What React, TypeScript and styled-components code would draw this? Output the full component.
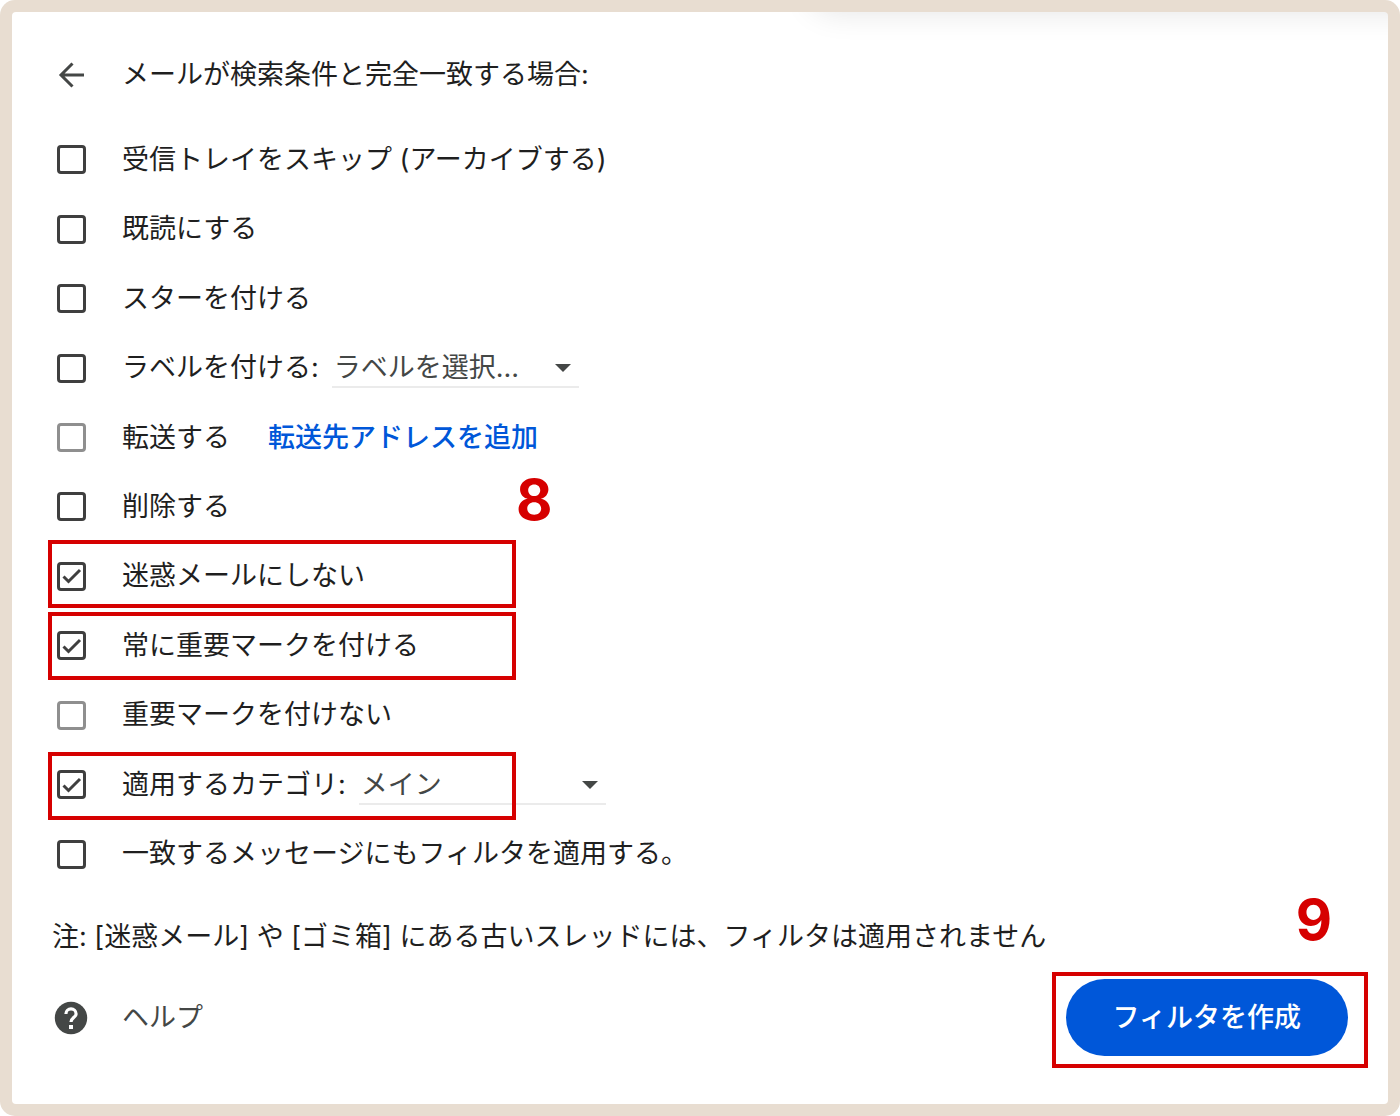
import React, { useState } from "react";
import styled, { createGlobalStyle } from "styled-components";

const color = {
  frame: "#e8ddd1",
  ink: "#1f1f1f",
  muted: "#444746",
  box: "#3f3f3f",
  disabled: "#8f8f8f",
  line: "#ebebeb",
  blue: "#0057d9",
  red: "#d60000",
};

const fontStack = `Inter, "Noto Sans CJK JP", sans-serif`;

const GlobalStyle = createGlobalStyle`
  *, *::before, *::after { box-sizing: border-box; }
  body {
    margin: 0;
    background: #fff;
    color: ${color.ink};
    font-family: ${fontStack};
    font-size: 27px;
    line-height: 40px;
  }
  button, select { font: inherit; }
`;

const Frame = styled.div`
  display: flex;
  min-height: 100vh;
  padding: 12px;
  background: ${color.frame};
  border-radius: 15px;
`;

const Panel = styled.main`
  position: relative;
  flex: 1;
  display: flex;
  flex-direction: column;
  padding: 30px 40px 48px;
  background: #fff;
  border-radius: 4px;
  overflow: hidden;

  &::before {
    content: "";
    position: absolute;
    top: -60px;
    left: 58%;
    right: -60px;
    height: 60px;
    border-radius: 24px;
    box-shadow: 0 0 32px rgba(0, 0, 0, 0.11);
  }
`;

const Header = styled.header`
  display: flex;
  align-items: center;
  gap: 32px;
  height: 66px;
`;

const Title = styled.h1`
  margin: 0;
  font-size: 27px;
  font-weight: 400;
`;

const IconButton = styled.button`
  display: grid;
  place-items: center;
  width: 38px;
  height: 38px;
  padding: 0;
  border: 0;
  background: none;
  color: ${color.muted};
  cursor: pointer;
`;

const OptionArea = styled.div`
  position: relative;
  margin-top: 17px;
`;

const OptionList = styled.ul`
  display: grid;
  grid-auto-rows: 1fr;
  min-height: 764px;
  margin: 0;
  padding: 0;
  list-style: none;
`;

const Option = styled.li`
  display: flex;
  align-items: center;
`;

const OptionLabel = styled.label`
  padding-left: 32px;
`;

const CheckCell = styled.span`
  position: relative;
  display: grid;
  place-items: center;
  width: 38px;
  height: 38px;
  color: ${color.box};

  svg {
    position: absolute;
    inset: 0;
    pointer-events: none;
  }
`;

const CheckInput = styled.input`
  appearance: none;
  width: 29px;
  height: 29px;
  margin: 0;
  border: 3px solid ${color.box};
  border-radius: 4px;
  background: #fff;

  &:disabled {
    border-color: ${color.disabled};
  }
`;

const SelectBox = styled.span`
  position: relative;
  width: 247px;
  margin-left: 13px;

  svg {
    position: absolute;
    right: 7px;
    top: 15px;
    pointer-events: none;
  }
`;

const Select = styled.select`
  appearance: none;
  display: block;
  width: 100%;
  height: 40px;
  padding: 0 32px 0 2px;
  border: 0;
  border-bottom: 2px solid ${color.line};
  border-radius: 0;
  background: none;
  color: ${color.muted};
`;

const TextLink = styled.a`
  margin-left: 38px;
  color: ${color.blue};
  font-weight: 500;
  text-decoration: none;
`;

const Note = styled.p`
  margin: 28px 0 22px;
`;

const Footer = styled.footer`
  position: relative;
  display: flex;
  align-items: center;
  justify-content: space-between;
`;

const HelpLink = styled.a`
  display: flex;
  align-items: center;
  gap: 32px;
  color: ${color.muted};
  text-decoration: none;
`;

const HelpIcon = styled.span`
  display: grid;
  place-items: center;
  width: 38px;
`;

const CreateButton = styled.button`
  height: 77px;
  padding: 0 47px;
  border: 0;
  border-radius: 39px;
  background: ${color.blue};
  color: #fff;
  font-weight: 500;
  cursor: pointer;
`;

const Marker = styled.div<{ $top: number }>`
  position: absolute;
  top: ${(p) => p.$top}px;
  left: -4px;
  width: 468px;
  height: 68px;
  border: 4px solid ${color.red};
  pointer-events: none;
`;

const ButtonMarker = styled.div`
  position: absolute;
  top: -7px;
  right: -20px;
  width: 316px;
  height: 96px;
  border: 4px solid ${color.red};
  pointer-events: none;
`;

const StepNumber = styled.span`
  position: absolute;
  color: ${color.red};
  font-family: Inter, "Liberation Sans", sans-serif;
  font-size: 56px;
  font-weight: 700;
  line-height: 60px;
`;

const OptionStep = styled(StepNumber)`
  top: 345px;
  left: 464px;
`;

const ButtonStep = styled(StepNumber)`
  top: -89px;
  right: 16px;
`;

function BackArrow() {
  return (
    <svg width="38" height="38" viewBox="0 0 38 38" fill="none" stroke="currentColor" strokeWidth="3" aria-hidden="true">
      <path d="M32 19H9M20.5 7.5 9 19l11.5 11.5" />
    </svg>
  );
}

function CheckMark() {
  return (
    <svg width="38" height="38" viewBox="0 0 38 38" fill="none" stroke="currentColor" strokeWidth="3" aria-hidden="true">
      <path d="M11.5 19.500 16.500 24.500 28 13" />
    </svg>
  );
}

function Caret() {
  return (
    <svg width="18" height="10" viewBox="0 0 18 10" fill={color.muted} aria-hidden="true">
      <path d="M1 1H17L9 9Z" />
    </svg>
  );
}

function QuestionMark() {
  return (
    <svg width="34" height="34" viewBox="0 0 34 34" aria-hidden="true">
      <circle cx="17" cy="17" r="16.200" fill={color.muted} />
      <path
        d="M11.900 12.900a5.100 5.100 0 0 1 10.200 0c0 3.400-5.100 4-5.100 8"
        fill="none"
        stroke="#fff"
        strokeWidth="3.200"
      />
      <rect x="15" y="24" width="4" height="4" fill="#fff" />
    </svg>
  );
}

function Dropdown({ name, choices }: { name: string; choices: string[] }) {
  return (
    <SelectBox>
      <Select aria-label={name}>
        {choices.map((choice) => (
          <option key={choice}>{choice}</option>
        ))}
      </Select>
      <Caret />
    </SelectBox>
  );
}

type Item = {
  id: string;
  label: string;
  disabled?: boolean;
  extra?: React.ReactNode;
};

const items: Item[] = [
  { id: "archive", label: "受信トレイをスキップ (アーカイブする)" },
  { id: "read", label: "既読にする" },
  { id: "star", label: "スターを付ける" },
  {
    id: "label",
    label: "ラベルを付ける:",
    extra: <Dropdown name="ラベル" choices={["ラベルを選択..."]} />,
  },
  {
    id: "forward",
    label: "転送する",
    disabled: true,
    extra: <TextLink href="#forward">転送先アドレスを追加</TextLink>,
  },
  { id: "delete", label: "削除する" },
  { id: "notSpam", label: "迷惑メールにしない" },
  { id: "important", label: "常に重要マークを付ける" },
  { id: "notImportant", label: "重要マークを付けない", disabled: true },
  {
    id: "category",
    label: "適用するカテゴリ:",
    extra: <Dropdown name="カテゴリ" choices={["メイン"]} />,
  },
  { id: "existing", label: "一致するメッセージにもフィルタを適用する。" },
];

const markerTops = [415, 487, 627];

export default function App() {
  const [checked, setChecked] = useState<string[]>(["notSpam", "important", "category"]);

  const toggle = (id: string) =>
    setChecked((ids) => (ids.includes(id) ? ids.filter((other) => other !== id) : [...ids, id]));

  return (
    <>
      <GlobalStyle />
      <Frame>
        <Panel>
          <Header>
            <IconButton type="button" aria-label="戻る">
              <BackArrow />
            </IconButton>
            <Title>メールが検索条件と完全一致する場合:</Title>
          </Header>

          <OptionArea>
            <OptionList>
              {items.map((item) => (
                <Option key={item.id}>
                  <CheckCell>
                    <CheckInput
                      type="checkbox"
                      id={item.id}
                      disabled={item.disabled}
                      checked={checked.includes(item.id)}
                      onChange={() => toggle(item.id)}
                    />
                    {checked.includes(item.id) && <CheckMark />}
                  </CheckCell>
                  <OptionLabel htmlFor={item.id}>{item.label}</OptionLabel>
                  {item.extra}
                </Option>
              ))}
            </OptionList>
            {markerTops.map((top) => (
              <Marker key={top} $top={top} />
            ))}
            <OptionStep>8</OptionStep>
          </OptionArea>

          <Note>注: [迷惑メール] や [ゴミ箱] にある古いスレッドには、フィルタは適用されません</Note>

          <Footer>
            <HelpLink href="#help">
              <HelpIcon>
                <QuestionMark />
              </HelpIcon>
              ヘルプ
            </HelpLink>
            <CreateButton type="button">フィルタを作成</CreateButton>
            <ButtonMarker />
            <ButtonStep>9</ButtonStep>
          </Footer>
        </Panel>
      </Frame>
    </>
  );
}
